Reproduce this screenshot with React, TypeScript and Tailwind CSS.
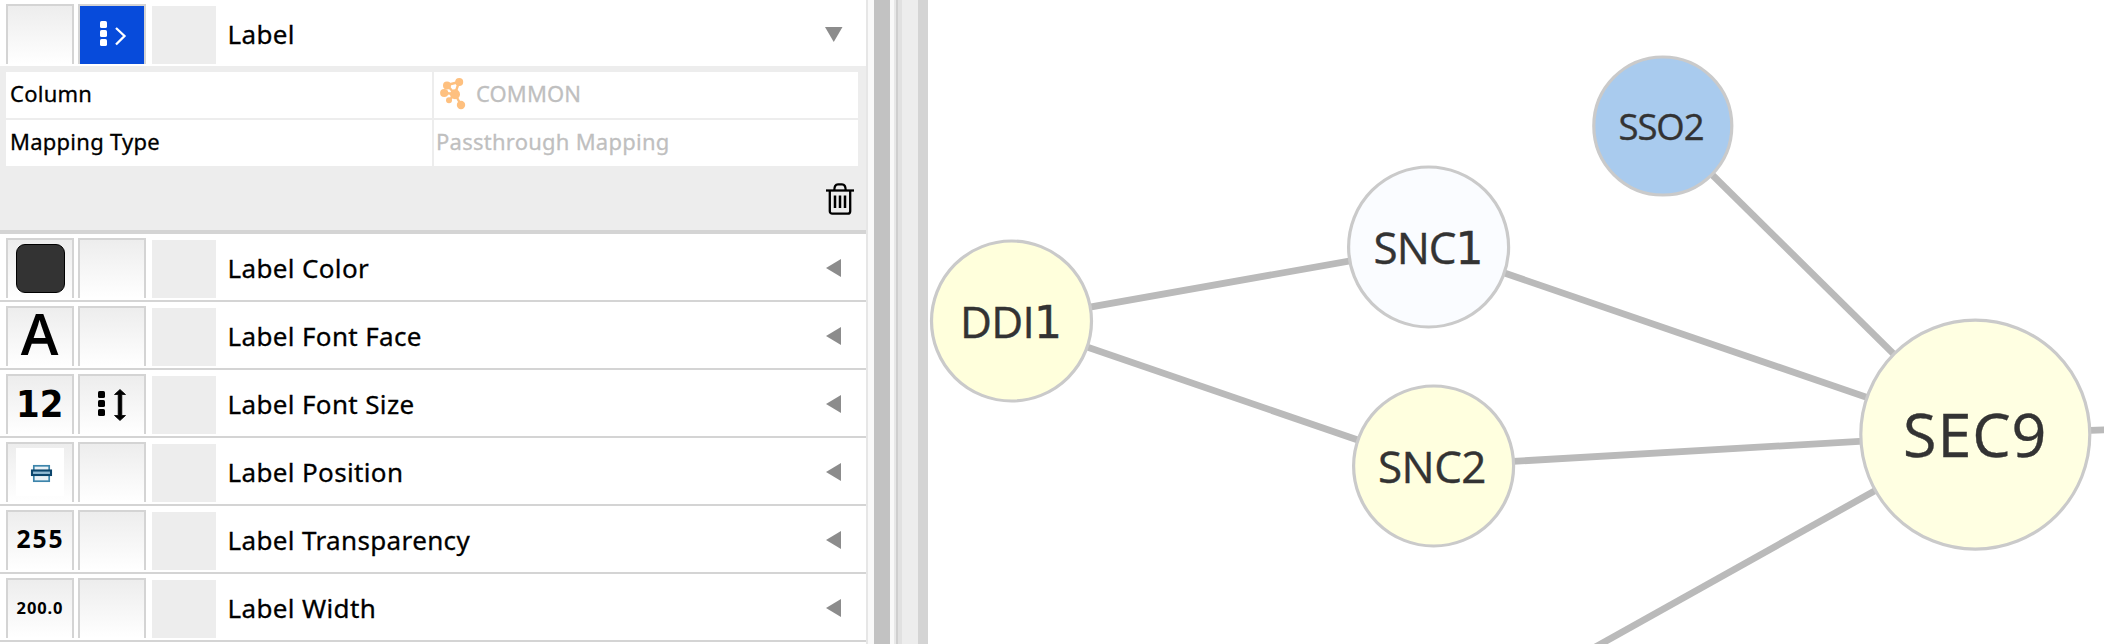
import type { ReactNode } from "react";
import clsx from "clsx";

function Dots({ x }: { x: number }) {
  return (
    <>
      {[15, 24, 33].map((y) => (
        <rect key={y} x={x} y={y} width="7" height="7" rx="1.6" fill="currentColor" />
      ))}
    </>
  );
}

function PassthroughIcon() {
  return (
    <svg width="64" height="58" viewBox="0 0 64 58" className="text-white">
      <Dots x={20} />
      <path d="M36 22l8.500 8L36 38.500" fill="none" stroke="currentColor" strokeWidth="2.300" />
    </svg>
  );
}

function ContinuousIcon() {
  return (
    <svg width="64" height="58" viewBox="0 0 64 58" className="text-black">
      <Dots x={18} />
      <path
        d="M40 13.500l5.500 5h-3.700v21h3.700l-5.500 5-5.500-5h3.700v-21h-3.700z"
        fill="currentColor"
        stroke="currentColor"
        strokeWidth="0.800"
        strokeLinejoin="round"
      />
    </svg>
  );
}

function PositionIcon() {
  return (
    <span className="mt-[4px] flex h-[48px] w-[48px] items-start justify-center bg-white">
      <svg width="48" height="48" viewBox="0 0 48 48">
        <rect x="17.800" y="17.800" width="15.400" height="15.400" fill="#e9f1f6" stroke="#3d85ab" strokeWidth="1.700" />
        <rect x="16" y="22.500" width="19" height="4.500" fill="#8fb9d2" stroke="#0b456c" strokeWidth="2.100" />
      </svg>
    </span>
  );
}

function TrashIcon() {
  return (
    <svg width="28" height="33" viewBox="0 0 28 33" fill="none" stroke="#000" strokeWidth="2.300">
      <path d="M0 7.500h28" />
      <path d="M3.800 7.500v20.700a2.500 2.500 0 0 0 2.500 2.500h15.400a2.500 2.500 0 0 0 2.500-2.500V7.500" />
      <path d="M8.300 7.500C8.300 3.200 9.500 1.400 12 1.400h4c2.500 0 3.700 1.800 3.700 6.100" />
      <path d="M9 12.500v12.500M14 12.500v12.500M19 12.500v12.500" strokeWidth="2.500" />
    </svg>
  );
}

function NetworkIcon() {
  return (
    <svg width="28" height="34" viewBox="9 7 28 34" fill="#fec07f" stroke="#fec07f">
      <path
        d="M17 15l12-3M29 12l-4 12M17 15l8 9M14.500 23l10.500 1M19 30.500l6-6.500M25 24l6 11"
        fill="none"
        strokeWidth="2.400"
      />
      <g stroke="none">
        <circle cx="17" cy="15.500" r="4" />
        <circle cx="29.200" cy="12" r="4" />
        <circle cx="14.200" cy="23" r="4.100" />
        <circle cx="25" cy="24.300" r="5" />
        <circle cx="19" cy="30.300" r="3" />
        <circle cx="31" cy="35" r="4.200" />
      </g>
    </svg>
  );
}

function Cell({ children, active }: { children?: ReactNode; active?: boolean }) {
  return (
    <span
      className={clsx(
        "flex h-[60px] w-[68px] items-start justify-center border-x-2 border-t-2 border-[#d4d4d4]",
        active ? "bg-[#074bdb]" : "bg-linear-to-b from-[#ededed] to-white",
      )}
    >
      {children}
    </span>
  );
}

function PropertyRow({
  name,
  value,
  mapping,
  open,
}: {
  name: string;
  value?: ReactNode;
  mapping?: ReactNode;
  open?: boolean;
}) {
  return (
    <div
      className={clsx(
        "flex shrink-0 items-start bg-white pl-[6px]",
        open ? "h-[66px]" : "h-[68px] border-b-2 border-[#d4d4d4]",
      )}
    >
      <div className="flex gap-1 pt-1">
        <Cell>{value}</Cell>
        <Cell active={open}>{mapping}</Cell>
      </div>
      <span className="mt-[6px] ml-[6px] h-[58px] w-[64px] bg-[#ededed]" />
      <span className="ml-[11.5px] grow text-[26px] leading-[68px] tracking-[0.36px] whitespace-nowrap [-webkit-text-stroke:0.3px]">
        {name}
      </span>
      {open ? (
        <svg width="18" height="15" viewBox="0 0 18 15" className="mt-[27px] mr-[23px]">
          <path d="M0 0h17.500L8.750 15z" fill="#8c8c8c" />
        </svg>
      ) : (
        <svg width="15" height="18" viewBox="0 0 15 18" className="mt-[25px] mr-[25px]">
          <path d="M15 0v18L0 9z" fill="#8c8c8c" />
        </svg>
      )}
    </div>
  );
}

function StylePanel() {
  return (
    <section className="flex h-full w-[866px] shrink-0 flex-col overflow-hidden bg-white">
      <PropertyRow name="Label" mapping={<PassthroughIcon />} open />
      <div className="flex h-[168px] shrink-0 flex-col border-b-4 border-[#d4d4d4] bg-[#ededed] pt-[6px] pr-2 pl-[6px]">
        <div className="grid grid-cols-[426px_424px] grid-rows-[46px_46px] gap-[2px] text-[22px] leading-[43px] tracking-[0.25px] whitespace-nowrap [-webkit-text-stroke:0.3px]">
          <div className="bg-white pl-1">Column</div>
          <div className="flex items-start bg-white pl-[5px] tracking-[0.1px] text-[#bfbfbf]">
            <span className="mt-[5px]">
              <NetworkIcon />
            </span>
            <span className="ml-[9px]">COMMON</span>
          </div>
          <div className="bg-white pl-1">Mapping Type</div>
          <div className="bg-white pl-[2px] text-[#bfbfbf]">Passthrough Mapping</div>
        </div>
        <div className="flex justify-end pt-[17px] pr-1">
          <TrashIcon />
        </div>
      </div>
      <PropertyRow
        name="Label Color"
        value={<span className="mt-[4px] h-[49px] w-[49px] rounded-[9px] border border-black bg-[#333333]" />}
      />
      <PropertyRow
        name="Label Font Face"
        value={<span className="pr-px font-['Open_Sans',sans-serif] text-[57px] leading-[51px] font-semibold">A</span>}
      />
      <PropertyRow
        name="Label Font Size"
        value={
          <span className="scale-x-[0.92] font-['DejaVu_Sans',sans-serif] text-[37px] leading-[58px] font-bold">12</span>
        }
        mapping={<ContinuousIcon />}
      />
      <PropertyRow name="Label Position" value={<PositionIcon />} />
      <PropertyRow
        name="Label Transparency"
        value={<span className="pl-px text-[24.700px] leading-[53.500px] font-bold tracking-[1.800px]">255</span>}
      />
      <PropertyRow
        name="Label Width"
        value={<span className="text-[16.500px] leading-[55px] font-bold tracking-[0.900px]">200.0</span>}
      />
    </section>
  );
}

function Divider() {
  return (
    <div className="flex h-full shrink-0">
      <span className="w-[2px] bg-[#e6e6e6]" />
      <span className="w-[6px] bg-[#f9f9f9]" />
      <span className="w-[16px] bg-[#c2c2c2]" />
      <span className="w-[4px] bg-[#f9f9f9]" />
      <span className="w-[2px] bg-[#e8e8e8]" />
      <span className="w-[2px] bg-[#cfcfcf]" />
      <span className="w-[4px] bg-[#e1e1e1]" />
      <span className="w-[16px] bg-[#ededed]" />
      <span className="w-[10px] bg-[#d4d4d4]" />
    </div>
  );
}

interface GraphNode {
  id: string;
  x: number;
  y: number;
  r: number;
  fill: string;
  size: number;
  textX: number;
  textY: number;
  textWidth: number;
}

const nodes: GraphNode[] = [
  { id: "DDI1", x: 1011.5, y: 321, r: 80, fill: "#ffffdc", size: 44, textX: 960, textY: 337.5, textWidth: 102 },
  { id: "SNC1", x: 1428.6, y: 247, r: 80, fill: "#fafcff", size: 44, textX: 1373.5, textY: 263.7, textWidth: 110 },
  { id: "SNC2", x: 1433.6, y: 466, r: 80, fill: "#ffffdf", size: 44, textX: 1378, textY: 482.5, textWidth: 108.5 },
  { id: "SSO2", x: 1662.8, y: 126, r: 69, fill: "#a9cbee", size: 36.5, textX: 1618.5, textY: 139.5, textWidth: 86 },
  { id: "SEC9", x: 1975.3, y: 434.6, r: 114.5, fill: "#ffffe2", size: 61, textX: 1903, textY: 457.3, textWidth: 143.5 },
];

const edges = [
  [1011.5, 321, 1428.6, 247],
  [1011.5, 321, 1433.6, 466],
  [1428.6, 247, 1975.3, 434.6],
  [1433.6, 466, 1975.3, 434.6],
  [1662.8, 126, 1975.3, 434.6],
  [1975.3, 434.6, 2120, 429.2],
  [1975.3, 434.6, 1565, 664],
];

function NetworkView() {
  return (
    <svg className="block h-full w-[1176px] shrink-0 bg-white" viewBox="928 0 1176 644">
      <g stroke="#bababa" strokeWidth="6.800">
        {edges.map(([x1, y1, x2, y2]) => (
          <line key={`${x1}-${y1}-${x2}-${y2}`} x1={x1} y1={y1} x2={x2} y2={y2} />
        ))}
      </g>
      {nodes.map((n) => (
        <g key={n.id} className="font-['Open_Sans',sans-serif]">
          <circle cx={n.x} cy={n.y} r={n.r} fill={n.fill} stroke="#cacaca" strokeWidth="3.200" />
          <text
            x={n.textX}
            y={n.textY}
            fontSize={n.size}
            textLength={n.textWidth}
            fill="#333333"
            stroke="#333333"
            strokeWidth="0.400"
          >
            {n.id.endsWith("1") ? (
              <>
                {n.id.slice(0, -1)}
                <tspan className="font-['DejaVu_Sans',sans-serif]">1</tspan>
              </>
            ) : (
              n.id
            )}
          </text>
        </g>
      ))}
    </svg>
  );
}

export default function App() {
  return (
    <main className="flex h-[644px] w-[2104px] overflow-hidden bg-white font-['Noto_Sans',sans-serif] text-black">
      <StylePanel />
      <Divider />
      <NetworkView />
    </main>
  );
}
